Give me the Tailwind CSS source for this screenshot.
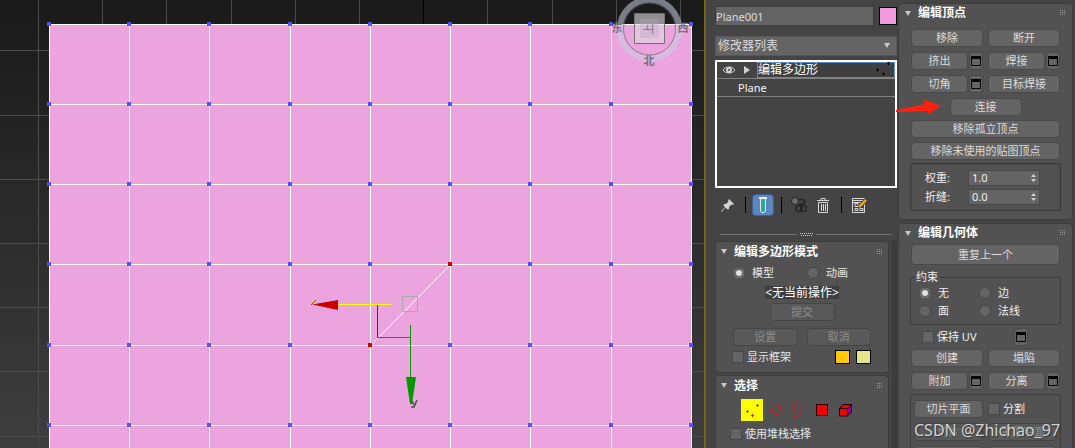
<!DOCTYPE html>
<html lang="zh-CN">
<head>
  <meta charset="UTF-8" />
  <meta name="viewport" content="width=device-width, initial-scale=1.0"/>
  <title>Plane001 - 编辑多边形</title>
  <script src="https://cdn.jsdelivr.net/npm/@tailwindcss/browser@4"></script>
</head>
<body class="bg-[#444444] text-[#e6e6e6] text-[11px] leading-4 font-['Noto_Sans','Noto_Sans_CJK_SC',sans-serif]">

  <!-- Iconos compartidos -->
  <svg class="hidden">
    <symbol id="grip" viewBox="0 0 6 6">
      <path d="M0 0h1v1H0zM2 0h1v1H2zM4 0h1v1H4zM0 2h1v1H0zM2 2h1v1H2zM4 2h1v1H4zM0 4h1v1H0zM2 4h1v1H2zM4 4h1v1H4z" fill="#9a9a9a"/>
    </symbol>
    <symbol id="down" viewBox="0 0 6 5"><path d="M0 0h6L3 5z" fill="#c8c8c8"/></symbol>
    <symbol id="dialog" viewBox="0 0 10 10">
      <path d="M.5.5h9v9h-9z" fill="none" stroke="#000"/><path d="M0 0h10v3H0z" fill="#000"/>
    </symbol>
    <symbol id="spin" viewBox="0 0 5 8"><path d="M0 3L2.500 0L5 3zM0 5h5L2.500 8z" fill="#d0d0d0"/></symbol>
  </svg>

  <div class="flex h-screen overflow-hidden">

    <!-- Visor -->
    <main class="flex-1 min-w-0 overflow-hidden bg-linear-to-b from-[#1a1a1a] to-[#3e3e3e] border-r-2 border-[#7c641c]">
      <svg class="block w-full h-full" aria-label="视口">
        <defs>
          <marker id="vertex" markerWidth="4" markerHeight="4" refX="2.500" refY="2.500" markerUnits="userSpaceOnUse">
            <path d="M0 0h4v4H0z" fill="#5353f0"/>
          </marker>
        </defs>
        <!-- rejilla de fondo -->
        <path d="M38.500 0V448M102.500 0V448M166.500 0V448M231.500 0V448M295.500 0V448M359.500 0V448M487.500 0V448M552.500 0V448M616.500 0V448M680.500 0V448M0 50.500H704M0 115.500H704M0 179.500H704M0 243.500H704M0 307.500H704M0 371.500H704M0 436.500H704" stroke="#4c4c4c" fill="none"/>
        <path d="M423.500 0V448" stroke="#000"/>
        <!-- plano -->
        <path d="M49 24H692V448H49z" fill="#eca4df"/>
        <path d="M49.500 24V448M129.500 24V448M209.500 24V448M290.500 24V448M370.500 24V448M450.500 24V448M530.500 24V448M611.500 24V448M691.500 24V448" stroke="#fff" fill="none"/>
        <g stroke="#fff" fill="none" marker-start="url(#vertex)" marker-mid="url(#vertex)" marker-end="url(#vertex)">
          <path d="M49.500 24.500H129.500H209.500H290.500H370.500H450.500H530.500H611.500H691.500"/>
          <path d="M49.500 104.500H129.500H209.500H290.500H370.500H450.500H530.500H611.500H691.500"/>
          <path d="M49.500 184.500H129.500H209.500H290.500H370.500H450.500H530.500H611.500H691.500"/>
          <path d="M49.500 264.500H129.500H209.500H290.500H370.500H450.500H530.500H611.500H691.500"/>
          <path d="M49.500 345.500H129.500H209.500H290.500H370.500H450.500H530.500H611.500H691.500"/>
          <path d="M49.500 425.500H129.500H209.500H290.500H370.500H450.500H530.500H611.500H691.500"/>
        </g>
        <path d="M370.500 345.500L450.500 264.500" stroke="#fff"/>
        <path d="M448 262h4v4h-4zM368 343h4v4h-4z" fill="#cc0000"/>
        <!-- gizmo de movimiento -->
        <path d="M402.500 296.500h15v15h-15z" fill="none" stroke="#a9a9a9"/>
        <path d="M338 304.500H391" stroke="#ffff00"/>
        <path d="M377.500 305V337" stroke="#b8002a"/>
        <path d="M377 337.500H410M410.500 325V377" stroke="#009a00" fill="none"/>
        <path d="M312 304.500L338 300V310z" fill="#c80000"/>
        <path d="M406 377h10l-4 27h-2z" fill="#009a00"/>
        <path d="M312 300l5 5M316 300l-5 5" stroke="#6b5a4a" fill="none"/>
        <path d="M311 299l5 5M315 299l-5 5" stroke="#ecd02c" fill="none"/>
        <path d="M412 401l2 4M417 400l-3 7h-3" stroke="#3c5a3c" stroke-width="1.500" fill="none"/>
        <!-- cubo de vista -->
        <circle cx="649.500" cy="29" r="29.500" fill="none" stroke="#c6cde2" stroke-opacity=".55" stroke-width="6"/>
        <circle cx="649.500" cy="29" r="26" fill="none" stroke="#6d6674" stroke-opacity=".7"/>
        <path d="M634.500 13.500h30v30h-30z" fill="#e0dbe0" fill-opacity=".6" stroke="#75706f"/>
        <path d="M640 19h19v19h-19z" fill="#b9a9c4" fill-opacity=".35"/>
        <g fill="#77707c" font-size="11" font-weight="bold" text-anchor="middle">
          <text x="649" y="33" font-weight="normal" transform="rotate(-90 649 29)">上</text>
          <text x="617" y="32">东</text>
          <text x="683" y="32">西</text>
          <text x="649" y="65">北</text>
        </g>
      </svg>
    </main>

    <!-- Panel de modificadores -->
    <aside class="w-48 shrink-0 flex flex-col pl-[9px] pt-[6px] pr-px">
      <div class="flex justify-between">
        <input type="text" value="Plane001" aria-label="名称" class="w-[159px] h-5 bg-[#646464] border border-[#3c3c3c] text-[#dcdcdc]"/>
        <button aria-label="颜色" class="size-[18px] bg-[#f09be0] border border-black mt-px"></button>
      </div>

      <div class="relative mt-[10px]">
        <select aria-label="修改器列表" class="appearance-none block w-full h-5 pl-[2px] bg-[#646464] border border-[#575757] text-xs text-[#dcdcdc]">
          <option>修改器列表</option>
        </select>
        <svg class="absolute right-[7px] top-[7px] w-[6px] h-[5px] pointer-events-none"><use href="#down"/></svg>
      </div>

      <ul class="mt-1 h-32 shrink-0 border-2 border-white text-[#f4f4f4]">
        <li class="flex items-center h-[17px] border-b border-[#808080]">
          <button aria-label="显示" class="ml-[5px]">
            <svg width="14" height="10" viewBox="0 0 14 10" fill="none" stroke="#d0d0d0">
              <path d="M1 5C3.500 1 10.500 1 13 5C10.500 9 3.500 9 1 5z"/><circle cx="7" cy="5" r="2" fill="#444" stroke-width="2"/>
            </svg>
          </button>
          <button aria-label="展开" class="ml-2">
            <svg width="6" height="8"><path d="M0 0L6 4L0 8z" fill="#d0d0d0"/></svg>
          </button>
          <label class="relative ml-[7px] flex-1 min-w-0">
            <input type="text" value="编辑多边形" aria-label="修改器" class="block w-full h-4 bg-[#3f3f3f] border border-[#5b8cc4] text-xs text-white"/>
            <svg class="absolute right-1 top-0 w-4 h-4"><path d="M1 8h3M2.500 6.500v3M7 12h3M8.500 10.500v3M12 1h3M13.500 0v3" stroke="#000"/></svg>
          </label>
        </li>
        <li class="h-[18px] pt-px pl-[21px] border-b border-[#808080]">Plane</li>
      </ul>

      <div class="flex items-center h-6 mt-[5px] shrink-0">
        <button aria-label="锁定堆栈" class="ml-[6px]">
          <svg width="13" height="13" viewBox="0 0 13 13"><path d="M8 0L13 5L11.500 6L10.500 5.500L8 8L8 10L6.500 10.500L4.500 8.500L.5 13L0 12.500L4 8L2.500 6.500L3 5H5L7.500 2.500L7 1.500z" fill="#d4d4d4"/></svg>
        </button>
        <span class="w-px h-4 ml-[11px] bg-black"></span>
        <button aria-label="显示最终结果" class="flex items-center justify-center w-[22px] h-[22px] ml-[6px] rounded-sm bg-[#5b87c0] border border-[#40608c]">
          <svg width="8" height="16" viewBox="0 0 8 16"><path d="M1.500 1.500V14L2.500 15.500H5.500L6.500 14V1.500" fill="#2fa8a0" stroke="#e4e4e4"/><path d="M0 1h8" stroke="#eee" stroke-width="2"/></svg>
        </button>
        <span class="w-px h-4 ml-[7px] bg-black"></span>
        <button aria-label="使唯一" class="ml-[9px]">
          <svg width="16" height="16" viewBox="0 0 16 16" fill="none" stroke="#242424"><path d="M7 2.500h5L14 5L12 7H9L7.500 9" stroke-width="1.500"/><circle cx="4" cy="4" r="3.500" fill="#6c6c6c"/><circle cx="8" cy="11.500" r="3" stroke-width="1.500"/><circle cx="12.500" cy="11.500" r="3" stroke-width="1.500"/></svg>
        </button>
        <button aria-label="移除修改器" class="ml-[10px]">
          <svg width="12" height="15" viewBox="0 0 12 15" fill="none" stroke="#d8d8d8"><path d="M0 2.500h12M4 2V.5h4V2M1.500 4.500V14.500h9V4.500zM4.500 6v7M6.500 6v7M8.500 6v7"/></svg>
        </button>
        <span class="w-px h-4 ml-[12px] bg-black"></span>
        <button aria-label="配置修改器集" class="ml-[10px]">
          <svg width="15" height="15" viewBox="0 0 15 15" fill="none"><path d="M.5.5h12v14H.5zM0 2.500h12M3 5.500h3v3H3zM3 10.500h3v2H3zM8 10.500h3v2H8zM0 4.500h10" stroke="#d8d8d8"/><path d="M7 9L14 2" stroke="#333" stroke-width="4"/><path d="M7 9L14 2" stroke="#eda321" stroke-width="2.500"/></svg>
        </button>
      </div>

      <div class="flex items-center gap-[3px] h-3 mt-[11px] pl-[5px] pr-[5px] shrink-0">
        <hr class="flex-1 border-[#707070]"/>
        <svg width="13" height="3"><path d="M0 .5h13M1 2.500h12" stroke="#d0d0d0" stroke-dasharray="1 1"/></svg>
        <hr class="flex-1 border-[#707070]"/>
      </div>

      <div class="flex flex-1 min-h-0 gap-[3px]">
        <div class="flex-1 flex flex-col gap-[2px] overflow-hidden">
          <!-- Modo de edición -->
          <section class="shrink-0 h-[132px] mt-px px-[5px] rounded-sm bg-[#525252] border border-[#3d3d3d]">
            <h2 class="flex items-center h-[19px] text-xs font-bold text-white">
              <svg class="w-[6px] h-[5px] mr-[7px]"><use href="#down"/></svg>编辑多边形模式
              <svg class="w-[6px] h-[6px] ml-auto"><use href="#grip"/></svg>
            </h2>
            <div class="flex mt-1 pl-3">
              <label class="flex items-center w-[74px] gap-[7px]"><input type="radio" name="mode" checked class="appearance-none size-3 rounded-full bg-[#656565] border border-[#484848] checked:bg-[#e0e0e0] checked:shadow-[inset_0_0_0_2px_#656565]"/>模型</label>
              <label class="flex items-center gap-[7px]"><input type="radio" name="mode" class="appearance-none size-3 rounded-full bg-[#656565] border border-[#484848]"/>动画</label>
            </div>
            <p class="w-fit h-[13px] mt-[5px] mx-auto text-xs leading-[13px] bg-[#3f3f3f] text-white">&lt;无当前操作&gt;</p>
            <div class="grid grid-cols-2 gap-x-[9px] gap-y-[7px] mt-1 pl-3 pr-3 text-[#8d8d8d]">
              <button disabled class="col-span-2 justify-self-center w-[65px] h-[18px] leading-4 rounded-sm bg-[#595959] border border-[#464646]">提交</button>
              <button disabled class="h-[18px] leading-4 rounded-sm bg-[#595959] border border-[#464646]">设置</button>
              <button disabled class="h-[18px] leading-4 rounded-sm bg-[#595959] border border-[#464646]">取消</button>
            </div>
            <div class="flex items-center mt-[3px] pl-[11px] pr-3">
              <label class="flex items-center gap-[3px] mr-auto"><input type="checkbox" class="appearance-none size-3 bg-[#646464] border border-[#484848]"/>显示框架</label>
              <button aria-label="框架颜色" class="w-[15px] h-[14px] bg-[#ffc800] border border-black"></button>
              <button aria-label="选定框架颜色" class="w-[15px] h-[14px] ml-[6px] bg-[#e4e48c] border border-black"></button>
            </div>
          </section>

          <!-- Selección -->
          <section class="shrink-0 h-40 px-[5px] rounded-sm bg-[#525252] border border-[#3d3d3d]">
            <h2 class="flex items-center h-[19px] text-xs font-bold text-white">
              <svg class="w-[6px] h-[5px] mr-[7px]"><use href="#down"/></svg>选择
              <svg class="w-[6px] h-[6px] ml-auto"><use href="#grip"/></svg>
            </h2>
            <div class="flex items-center h-[22px] mt-1 pl-5">
              <button aria-label="顶点" class="bg-[#ffff00]">
                <svg class="block" width="22" height="22"><path d="M15 6.500h3M16.500 5v3M5 12.500h3M6.500 11v3M10 16.500h3M11.500 15v3" stroke="#e02000"/></svg>
              </button>
              <button aria-label="边" class="ml-[5px]"><svg width="16" height="14" viewBox="0 0 16 14"><path d="M1.500 7.500L14 1.500L10.500 12.500z" fill="none" stroke="#d01414"/></svg></button>
              <button aria-label="边界" class="ml-[7px]"><svg width="12" height="16" viewBox="0 0 12 16"><path d="M2 1.500L7 .5Q11 4 10.500 8Q10 12 6 15L3 14.500Q1 12 4.500 10Q5.500 7 2 5z" fill="none" stroke="#d01414"/></svg></button>
              <button aria-label="多边形" class="ml-[13px]"><svg width="12" height="12"><path d="M.5.5h11v11H.5z" fill="#f00000" stroke="#200000"/></svg></button>
              <button aria-label="元素" class="ml-[11px]"><svg width="13" height="13" viewBox="0 0 13 13" stroke="#200000"><path d="M.5 4.500h8v7.500h-8z" fill="#f00000"/><path d="M.5 4.500L4 .5h8.500L8.500 4.500z" fill="#f00000"/><path d="M8.500 4.500L12.500 .5V8L8.500 12z" fill="#800080"/></svg></button>
            </div>
            <label class="flex items-center gap-[3px] mt-[5px] pl-[9px]"><input type="checkbox" class="appearance-none size-3 bg-[#646464] border border-[#484848]"/>使用堆栈选择</label>
          </section>
        </div>
        <div class="w-[5px] bg-[#3c3c3c] rounded-t-sm"></div>
      </div>
    </aside>

    <!-- Panel de edición -->
    <aside class="w-[177px] shrink-0 flex flex-col gap-[3px] pt-[3px] pr-[2px]">
      <!-- Editar vértices -->
      <section class="shrink-0 h-[217px] px-[6px] rounded-sm bg-[#525252] border border-[#3d3d3d]">
        <h2 class="flex items-center h-[18px] text-xs font-bold text-white">
          <svg class="w-[6px] h-[5px] mr-[7px]"><use href="#down"/></svg>编辑顶点
          <svg class="w-[6px] h-[6px] ml-auto"><use href="#grip"/></svg>
        </h2>
        <div class="px-[6px] mt-[7px] text-[#dcdcdc]">
          <div class="grid grid-cols-2 gap-x-[5px] gap-y-[5px]">
            <button class="h-[18px] leading-4 rounded-sm bg-[#646464] border border-[#494949]">移除</button>
            <button class="h-[18px] leading-4 rounded-sm bg-[#646464] border border-[#494949]">断开</button>
            <div class="flex gap-px">
              <button class="flex-1 h-[18px] leading-4 rounded-sm bg-[#646464] border border-[#494949]">挤出</button>
              <button aria-label="挤出设置" class="flex items-center justify-center w-[14px] h-[18px] rounded-sm bg-[#646464] border border-[#494949]"><svg class="w-[10px] h-[10px] shrink-0"><use href="#dialog"/></svg></button>
            </div>
            <div class="flex gap-px">
              <button class="flex-1 h-[18px] leading-4 rounded-sm bg-[#646464] border border-[#494949]">焊接</button>
              <button aria-label="焊接设置" class="flex items-center justify-center w-[14px] h-[18px] rounded-sm bg-[#646464] border border-[#494949]"><svg class="w-[10px] h-[10px] shrink-0"><use href="#dialog"/></svg></button>
            </div>
            <div class="flex gap-px">
              <button class="flex-1 h-[18px] leading-4 rounded-sm bg-[#646464] border border-[#494949]">切角</button>
              <button aria-label="切角设置" class="flex items-center justify-center w-[14px] h-[18px] rounded-sm bg-[#646464] border border-[#494949]"><svg class="w-[10px] h-[10px] shrink-0"><use href="#dialog"/></svg></button>
            </div>
            <button class="h-[18px] leading-4 rounded-sm bg-[#646464] border border-[#494949]">目标焊接</button>
            <div class="relative col-span-2 flex justify-center">
              <svg class="absolute -left-[15px] top-0 w-[46px] h-[18px]"><path d="M0 12L29 6L27 1L45 8L31 17L32 13L0 14z" fill="#ff2010"/></svg>
              <button class="w-[72px] h-[18px] leading-4 rounded-sm bg-[#646464] border border-[#494949]">连接</button>
            </div>
          </div>
          <div class="grid gap-1 mt-1">
            <button class="h-[18px] leading-4 rounded-sm bg-[#646464] border border-[#494949]">移除孤立顶点</button>
            <button class="h-[18px] leading-4 rounded-sm bg-[#646464] border border-[#494949]">移除未使用的贴图顶点</button>
          </div>
          <div class="grid gap-[3px] h-12 mt-[3px] -mx-px pt-[6px] pl-[14px] content-start border border-[#3c3c3c] rounded-xs shadow-[inset_0_0_0_1px_#4a4a4a] text-[#f0f0f0]">
            <div class="flex items-center">
              <label for="weight" class="w-[43px]">权重:</label>
              <div class="relative w-[72px]">
                <input id="weight" type="text" value="1.0" class="block w-full h-4 pl-[3px] bg-[#646464] border border-[#494949]"/>
                <svg class="absolute right-1 top-1 w-[5px] h-2"><use href="#spin"/></svg>
              </div>
            </div>
            <div class="flex items-center">
              <label for="crease" class="w-[43px]">折缝:</label>
              <div class="relative w-[72px]">
                <input id="crease" type="text" value="0.0" class="block w-full h-4 pl-[3px] bg-[#646464] border border-[#494949]"/>
                <svg class="absolute right-1 top-1 w-[5px] h-2"><use href="#spin"/></svg>
              </div>
            </div>
          </div>
        </div>
      </section>

      <!-- Editar geometría -->
      <section class="relative flex-1 min-h-0 overflow-hidden px-[6px] rounded-t-sm bg-[#525252] border border-b-0 border-[#3d3d3d]">
        <h2 class="flex items-center h-[18px] text-xs font-bold text-white">
          <svg class="w-[6px] h-[5px] mr-[7px]"><use href="#down"/></svg>编辑几何体
          <svg class="w-[6px] h-[6px] ml-auto"><use href="#grip"/></svg>
        </h2>
        <div class="px-[6px] mt-[2px] text-[#dcdcdc]">
          <button class="block w-full h-[21px] rounded-sm bg-[#646464] border border-[#494949]">重复上一个</button>
          <fieldset class="h-14 mt-1 -mx-px pl-1 border border-[#3c3c3c] rounded-xs text-[#f0f0f0]">
            <legend class="px-px h-4">约束</legend>
            <div class="grid grid-cols-[60px_auto] gap-y-[2px] pl-1">
              <label class="flex items-center gap-[7px]"><input type="radio" name="constraint" checked class="appearance-none size-3 rounded-full bg-[#656565] border border-[#484848] checked:bg-[#e0e0e0] checked:shadow-[inset_0_0_0_2px_#656565]"/>无</label>
              <label class="flex items-center gap-[7px]"><input type="radio" name="constraint" class="appearance-none size-3 rounded-full bg-[#656565] border border-[#484848]"/>边</label>
              <label class="flex items-center gap-[7px]"><input type="radio" name="constraint" class="appearance-none size-3 rounded-full bg-[#656565] border border-[#484848]"/>面</label>
              <label class="flex items-center gap-[7px]"><input type="radio" name="constraint" class="appearance-none size-3 rounded-full bg-[#656565] border border-[#484848]"/>法线</label>
            </div>
          </fieldset>
          <div class="flex items-center justify-between h-[18px] mt-[3px] pl-[11px] pr-8 text-[#f0f0f0]">
            <label class="flex items-center gap-[3px]"><input type="checkbox" class="appearance-none size-3 bg-[#646464] border border-[#484848]"/>保持 UV</label>
            <button aria-label="保持 UV 设置" class="flex items-center justify-center w-[14px] h-[18px] rounded-sm bg-[#646464] border border-[#494949]"><svg class="w-[10px] h-[10px] shrink-0"><use href="#dialog"/></svg></button>
          </div>
          <div class="grid grid-cols-2 gap-x-[5px] gap-y-[5px] mt-[3px]">
            <button class="h-[18px] leading-4 rounded-sm bg-[#646464] border border-[#494949]">创建</button>
            <button class="h-[18px] leading-4 rounded-sm bg-[#646464] border border-[#494949]">塌陷</button>
            <div class="flex gap-px">
              <button class="flex-1 h-[18px] leading-4 rounded-sm bg-[#646464] border border-[#494949]">附加</button>
              <button aria-label="附加设置" class="flex items-center justify-center w-[14px] h-[18px] rounded-sm bg-[#646464] border border-[#494949]"><svg class="w-[10px] h-[10px] shrink-0"><use href="#dialog"/></svg></button>
            </div>
            <div class="flex gap-px">
              <button class="flex-1 h-[18px] leading-4 rounded-sm bg-[#646464] border border-[#494949]">分离</button>
              <button aria-label="分离设置" class="flex items-center justify-center w-[14px] h-[18px] rounded-sm bg-[#646464] border border-[#494949]"><svg class="w-[10px] h-[10px] shrink-0"><use href="#dialog"/></svg></button>
            </div>
          </div>
          <div class="grid grid-cols-2 gap-x-[5px] gap-y-[5px] mt-1 -mx-px pt-[5px] px-[3px] pb-1 border border-[#3c3c3c] rounded-xs">
            <button class="h-[18px] leading-4 rounded-sm bg-[#646464] border border-[#494949]">切片平面</button>
            <label class="flex items-center gap-[3px] text-[#f0f0f0]"><input type="checkbox" class="appearance-none size-3 bg-[#646464] border border-[#484848]"/>分割</label>
            <button disabled class="h-[18px] leading-4 rounded-sm bg-[#595959] border border-[#464646] text-[#8d8d8d]">切片</button>
            <button disabled class="h-[18px] leading-4 rounded-sm bg-[#595959] border border-[#464646] text-[#8d8d8d]">重置平面</button>
            <button aria-label="快速切片" class="h-[18px] rounded-sm bg-[#646464] border border-[#494949]"></button>
            <button aria-label="切割" class="h-[18px] rounded-sm bg-[#646464] border border-[#494949]"></button>
          </div>
        </div>
        <p class="absolute left-[15px] bottom-[6px] text-base leading-6 whitespace-nowrap text-[#d4d4d4] text-shadow-[1px_1px_1px_#333]">CSDN @Zhichao_97</p>
      </section>
    </aside>

  </div>

</body>
</html>
